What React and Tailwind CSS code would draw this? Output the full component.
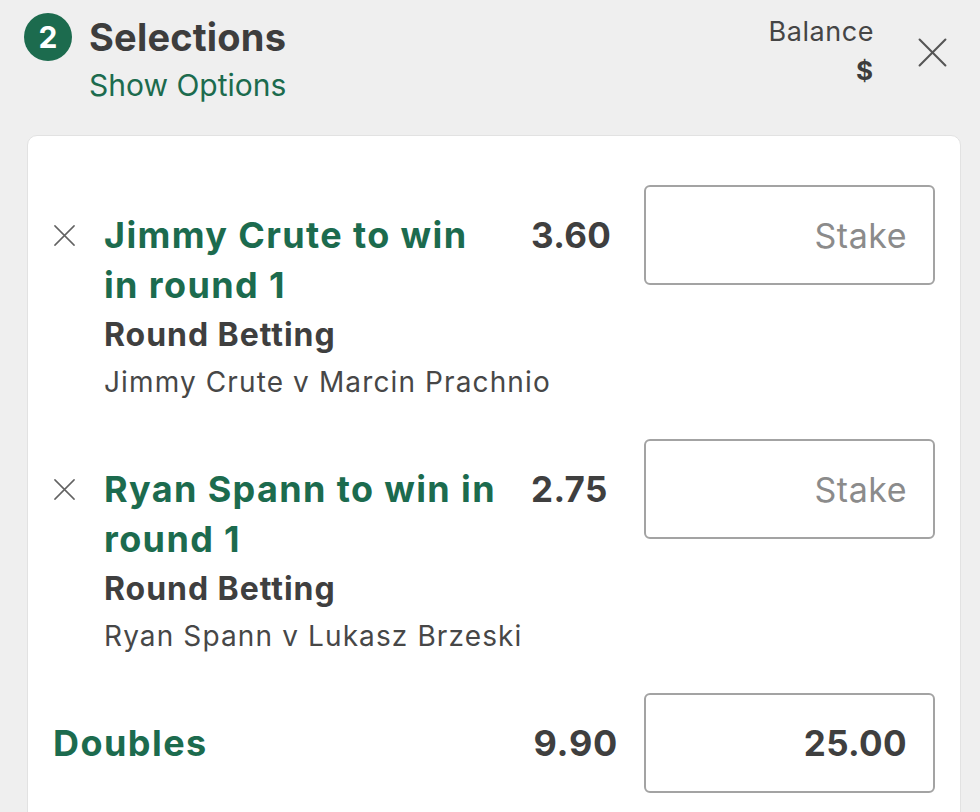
import React from "react";

const selections = [
  {
    title: "Jimmy Crute to win in round 1",
    market: "Round Betting",
    event: "Jimmy Crute v Marcin Prachnio",
    odds: "3.60",
  },
  {
    title: "Ryan Spann to win in round 1",
    market: "Round Betting",
    event: "Ryan Spann v Lukasz Brzeski",
    odds: "2.75",
  },
];

const CrossIcon = ({ className }) => (
  <svg viewBox="0 0 24 24" className={className} fill="none" stroke="currentColor" strokeWidth="1.6" strokeLinecap="round">
    <path d="M2 2 L22 22 M22 2 L2 22" />
  </svg>
);

const StakeBox = ({ value }) => (
  <div className="w-[291px] h-[100px] shrink-0 rounded-[6px] border-2 border-[#a3a3a3] flex items-center justify-end pr-[26px]">
    {value ? (
      <span className="text-[35px] font-bold text-[#3f3f3f] tracking-[0.01em]">{value}</span>
    ) : (
      <span className="text-[34px] text-[#8b8b8b] tracking-[0.015em]">Stake</span>
    )}
  </div>
);

const App = () => {
  return (
    <div className="w-[980px] h-[812px] overflow-hidden bg-[#efefef] font-['Inter',sans-serif]">
      {/* header */}
      <div className="flex items-start pl-[24px] pr-[32px] pt-[13px] h-[135px]">
        <div className="w-[48px] h-[48px] rounded-full bg-[#1c6b4e] text-white flex items-center justify-center text-[30px] font-bold">
          2
        </div>
        <div className="ml-[17px]">
          <h1 className="text-[38px] leading-[48px] font-bold text-[#3d3d3d] tracking-[0.005em]">Selections</h1>
          <p className="text-[30px] leading-[48px] text-[#1c6b4e]">Show Options</p>
        </div>
        <div className="ml-auto flex items-start">
          <div className="text-right pt-[3px]">
            <p className="text-[27px] leading-[32px] text-[#454545] tracking-[0.02em]">Balance</p>
            <p className="text-[26px] leading-[46px] font-bold text-[#3d3d3d] pr-[1px]">$</p>
          </div>
          <CrossIcon className="w-[31px] h-[31px] ml-[43px] mt-[24px] text-[#555555]" />
        </div>
      </div>

      {/* card */}
      <div className="mx-[27px] mr-[19px] h-[700px] bg-white rounded-t-[10px] border border-[#e2e2e2] pl-[25px] pr-[25px] pt-[49px]">
        {selections.map((s) => (
          <div key={s.title} className="flex items-start h-[254px]">
            <CrossIcon className="w-[23px] h-[23px] mt-[39px] text-[#626262] shrink-0" />
            <div className="w-[402px] ml-[28px] pt-[25px] shrink-0">
              <h2 className="text-[36px] leading-[50px] font-bold text-[#1c6b4e] tracking-[0.038em]">{s.title}</h2>
              <p className="text-[32px] leading-[50px] font-bold text-[#3f3f3f] tracking-[0.03em]">{s.market}</p>
              <p className="text-[28px] leading-[44px] text-[#474747] tracking-[0.04em] whitespace-nowrap">{s.event}</p>
            </div>
            <div className="flex-1 pt-[25px] text-[35px] leading-[50px] font-bold text-[#3f3f3f] pl-[25px] tracking-[0.01em]">
              {s.odds}
            </div>
            <StakeBox />
          </div>
        ))}
        <div className="flex items-center h-[100px]">
          <h2 className="text-[36px] font-bold text-[#1c6b4e] tracking-[0.04em]">Doubles</h2>
          <div className="ml-auto mr-[26px] text-[36px] font-bold text-[#3f3f3f] tracking-[0.02em]">9.90</div>
          <StakeBox value="25.00" />
        </div>
      </div>
    </div>
  );
};

export default App;
